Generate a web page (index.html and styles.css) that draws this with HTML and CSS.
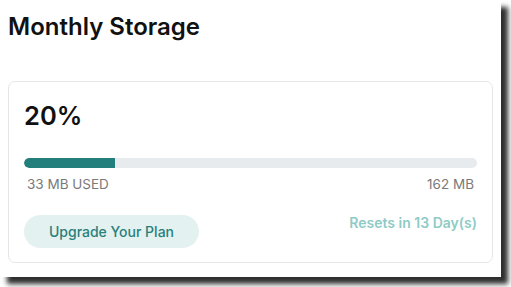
FILE: index.html
```html
<!DOCTYPE html>
<html>
<head>
<meta charset="utf-8">
<link rel="stylesheet" href="styles.css">
</head>
<body>
<div class="frame">
  <h1 class="title">Monthly Storage</h1>
  <div class="card">
    <div class="percent">20%</div>
    <div class="bar"><div class="fill" style="width:20%"></div></div>
    <div class="labels"><span>33 MB USED</span><span>162 MB</span></div>
    <div class="footer">
      <button class="upgrade">Upgrade Your Plan</button>
      <span class="resets">Resets in 13 Day(s)</span>
    </div>
  </div>
</div>
</body>
</html>
```

FILE: styles.css
```css
html, body { margin: 0; background: #fff; }
body { font-family: Inter, "Noto Sans", sans-serif; min-height: 287px; }
.frame {
  width: 501px;
  height: 277px;
  box-sizing: border-box;
  background: #fff;
  padding: 12px 8px 0 8px;
  box-shadow: 7px 7px 5px rgba(0,0,0,0.82);
}
.title {
  margin: 0;
  font-size: 24px;
  line-height: 29px;
  font-weight: 600;
  color: #111;
}
.card {
  margin-top: 40px;
  border: 1px solid #e6e6e6;
  border-radius: 7px;
  padding: 18px 15px 14px 15px;
}
.percent {
  font-size: 25.5px;
  line-height: 32px;
  font-weight: 600;
  color: #111;
}
.bar {
  margin-top: 26px;
  height: 10px;
  border-radius: 5px;
  background: #e8ebee;
  overflow: hidden;
}
.fill { height: 100%; background: #237f7b; border-radius: 5px 0 0 5px; }
.labels {
  margin-top: 8px;
  display: flex;
  justify-content: space-between;
  font-size: 13.5px;
  line-height: 16px;
  color: #7a7a7a;
  padding: 0 3px;
}
.footer {
  margin-top: 23px;
  display: flex;
  justify-content: space-between;
  align-items: flex-start;
}
.upgrade {
  font-family: inherit;
  height: 33px;
  width: 175px;
  border: none;
  border-radius: 17px;
  background: #e3f1f0;
  color: #2a7f7b;
  font-size: 14px;
  font-weight: 500;
  padding: 0;
}
.resets {
  font-size: 14px;
  line-height: 16px;
  font-weight: 600;
  color: #8fcbc6;
}
```
